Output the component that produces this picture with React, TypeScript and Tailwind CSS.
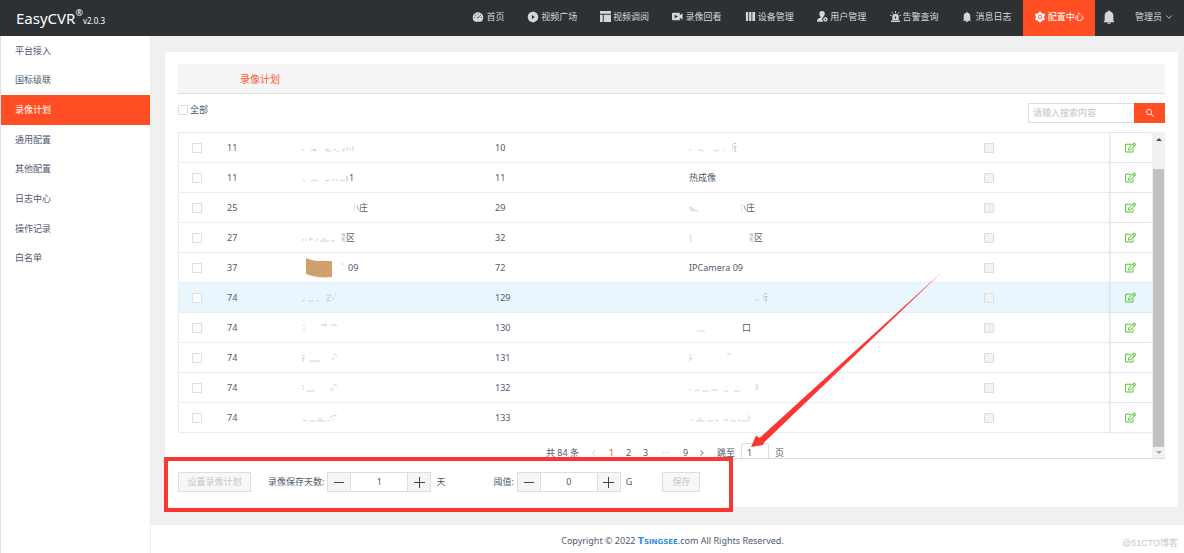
import { FC, ReactNode, useState } from 'react';
import { AiFillBell, AiFillDashboard, AiFillPlayCircle, AiFillSetting, AiOutlineSearch } from 'react-icons/ai';
import { FaRegEdit } from 'react-icons/fa';
import { ChevronDown, ChevronLeft, ChevronRight } from 'lucide-react';

const LayoutIcon = () => (
  <svg viewBox="0 0 12 12" className="size-[11px]" fill="currentColor">
    <path d="M0 0h12v3H0zM0 4h3v8H0zM4 4h8v8H4z" />
  </svg>
);

const RecordIcon = () => (
  <svg viewBox="0 0 12 12" className="size-[11px]" fill="currentColor">
    <path fillRule="evenodd" d="M1 2h7.500v2.600L11.500 2.500v7L8.500 7.400V10H1a1 1 0 0 1-1-1V3a1 1 0 0 1 1-1zm2 2v4l3.500-2z" />
  </svg>
);

const DeviceIcon = () => (
  <svg viewBox="0 0 12 12" className="size-[11px]" fill="currentColor">
    <path d="M1 1h2.500v10H1zM4.500 1H7v10H4.500zM8 1h3v10H8z" />
  </svg>
);

const UserIcon = () => (
  <svg viewBox="0 0 12 12" className="size-[11px]" fill="currentColor">
    <path d="M5.500 0a3 3 0 0 1 3 3c0 1.300-.6 2.300-1.300 3L7 6.500c-1.200.7-1.500 2-1.200 3.300.2.900.6 1.500 1.200 1.900H0C0 9 1 7.800 4 7L3.800 6C3 5.300 2.500 4.300 2.500 3a3 3 0 0 1 3-3z" />
    <path fillRule="evenodd" d="M9.200 6.500l.8.700 1 .1.200 1 .6.900-.6.900-.2 1-1 .1-.8.600-.8-.6-1-.1-.2-1-.6-.9.600-.9.200-1 1-.1zm0 1.900a.8.800 0 1 0 0 1.600.8.800 0 0 0 0-1.600z" />
  </svg>
);

const AlarmIcon = () => (
  <svg viewBox="0 0 12 12" className="size-[11px]" fill="currentColor">
    <path fillRule="evenodd" d="M2.500 10V6.500a3.500 3.500 0 0 1 7 0V10zM6.500 5L4.700 7.500h1L5.500 9.300l1.800-2.600h-1z" />
    <path d="M1 10.500h10V12H1z" />
    <path d="M6 0v2M2 1.200l1.200 1.500M10 1.200L8.800 2.700M0 4.500l1.700.6M12 4.500l-1.700.6" stroke="currentColor" />
  </svg>
);

const navItems: { label: string; icon: ReactNode }[] = [
  { label: '视频广场', icon: <AiFillPlayCircle size={12} /> },
  { label: '视频调阅', icon: <LayoutIcon /> },
  { label: '录像回看', icon: <RecordIcon /> },
  { label: '设备管理', icon: <DeviceIcon /> },
  { label: '用户管理', icon: <UserIcon /> },
  { label: '告警查询', icon: <AlarmIcon /> },
  { label: '消息日志', icon: <AiFillBell size={12} /> },
  { label: '配置中心', icon: <AiFillSetting size={12} /> },
];

const menuItems = ['平台接入', '国标级联', '录像计划', '通用配置', '其他配置', '日志中心', '操作记录', '白名单'];

// A name that has been rubbed out: leftover marks, then a half visible character, then the readable end
interface Masked {
  marks?: string;
  width?: number;
  faded?: string;
  text?: string;
  patch?: boolean;
}

interface Row {
  id: string;
  name: Masked;
  channel: string;
  device: Masked;
}

const rows: Row[] = [
  {
    id: '11',
    name: { marks: 'M0 9l2-2M9 9l2-1 4 1M11 7l3 1M23 8l4-1M24 9h5M31 9l3-2M36 8v2M40 8l2 1M42 6v3M45 9V5M48 9V6M51 9V4', width: 54 },
    channel: '10',
    device: { marks: 'M0 9l2-2M9 9l2-1 4 1M25 9l5-1M34 9l2-1', width: 39, faded: '析' },
  },
  {
    id: '11',
    name: { marks: 'M1 8l2 1M9 9l3-1 4 1M23 9l5-1M30 9l3-2M35 7v2M38 8l3 1M42 9V7M44 5l2-1M45 10V4M44 7h3', width: 47, text: '1' },
    channel: '11',
    device: { text: '热成像' },
  },
  { id: '25', name: { width: 48, faded: '小', text: '庄' }, channel: '29', device: { marks: 'M0 5l3 1-3 2M2 8l7 1M4 6v3', width: 48, faded: '小', text: '庄' } },
  {
    id: '27',
    name: { marks: 'M0 9l2-2M4 9V7M8 9V6l3 2M13 9l3-3M18 9h9M20 7h4M29 9h4', width: 35, faded: '景', text: '区' },
    channel: '32',
    device: { marks: 'M2 2L0 5M2 5v5', width: 56, faded: '景', text: '区' },
  },
  { id: '37', name: { patch: true, width: 46, text: '09' }, channel: '72', device: { text: 'IPCamera 09' } },
  {
    id: '74',
    name: { marks: 'M0 9l3-1M6 9h6M15 8l2 1M24 3h5l-2 3M24 8l5 1M32 3l2-1M26 5v4M31 5v3', width: 40 },
    channel: '129',
    device: { marks: 'M66 9l4-2', width: 70, faded: '析' },
  },
  {
    id: '74',
    name: { marks: 'M1 3l2 1M1 8l2-1M19 3h6M22 2l3 2M28 3h5M32 2l3 2', width: 40 },
    channel: '130',
    device: { marks: 'M8 9h8', width: 53, text: '口' },
  },
  {
    id: '74',
    name: { marks: 'M0 3l3 1M0 7l3-1M1 5v5M7 9h11M30 8l2-3M32 2l3 2', width: 40 },
    channel: '131',
    device: { marks: 'M0 3h3M0 6h3M0 9l3-3M38 2h4', width: 44 },
  },
  {
    id: '74',
    name: { marks: 'M0 3l2 2M1 8l1-2M5 9h8M28 8l3-3M30 9l2-2M31 2l4 2', width: 40 },
    channel: '132',
    device: { marks: 'M0 9l2-2M6 9l5-1M13 9h7M22 8h7M35 9h4M45 9h6M66 3h3l-1 5M66 6h3', width: 72 },
  },
  {
    id: '74',
    name: { marks: 'M1 8l4 1M7 9h6M14 9h9M16 7h4M25 9l3-1M28 6l3-2M31 7v2M31 3l4 1', width: 40 },
    channel: '133',
    device: { marks: 'M2 7l3 2M7 9h9M9 7h4M18 9h6M26 8l4 1M35 8h4M41 9h6M49 8l3 1M53 9h6M60 3v6', width: 64 },
  },
];

const MaskedText: FC<Masked> = ({ marks, width = 0, faded, text, patch }) => (
  <div className="flex items-center">
    {width > 0 && (
      <svg width={width} height={20} viewBox={`0 -4 ${width} 20`} className="shrink-0" fill="none">
        {patch && (
          <>
            <path d="M4-4C12 0 20-1 30-1V15C20 16 12 15 4 12z" fill="#d29f6e" />
            <path d="M39 2h3M42 7v1" stroke="#dcdee2" />
          </>
        )}
        {marks && <path d={marks} stroke="#c5c8ce" strokeWidth="0.8" />}
      </svg>
    )}
    {faded && (
      <span className="bg-linear-to-r from-transparent from-35% to-[#6b7385] to-90% bg-clip-text text-transparent">
        {faded}
      </span>
    )}
    {text && <span>{text}</span>}
  </div>
);

const checkboxClass =
  'block size-[10px] appearance-none rounded-[1px] border border-[#dcdee2] bg-white checked:bg-[#ff4e24] disabled:bg-[#f3f3f3]';

interface StepperProps {
  id: string;
  label: string;
  unit: string;
  initial: number;
}

const Stepper: FC<StepperProps> = ({ id, label, unit, initial }) => {
  const [value, setValue] = useState(initial);

  return (
    <div className="flex items-center">
      <label htmlFor={id}>{label}</label>
      <div className="mr-[5px] ml-[3px] flex h-5 border border-[#dcdee2]">
        <button
          type="button"
          aria-label="减少"
          onClick={() => setValue(Math.max(0, value - 1))}
          className="flex w-[23px] items-center justify-center border-r border-[#dcdee2] bg-[#f5f5f5]"
        >
          <span className="h-px w-[10px] bg-[#3c4353]" />
        </button>
        <input
          id={id}
          value={value}
          onChange={(e) => setValue(Number(e.target.value) || 0)}
          className="w-14 bg-white text-center outline-none"
        />
        <button
          type="button"
          aria-label="增加"
          onClick={() => setValue(value + 1)}
          className="flex w-[23px] items-center justify-center border-l border-[#dcdee2] bg-[#f5f5f5]"
        >
          <svg viewBox="0 0 11 11" className="size-[11px]" stroke="#3c4353">
            <path d="M5.500 0v11M0 5.500h11" />
          </svg>
        </button>
      </div>
      <span>{unit}</span>
    </div>
  );
};

const Header: FC = () => (
  <header className="flex h-9 shrink-0 items-stretch bg-[#2d3134] text-[#d5d6d7]">
    <h1 className="flex items-center pl-4 text-[15px] text-white">
      EasyCVR
      <sup className="top-[-5px] text-[9px]">®</sup>
      <span className="mt-[6px] text-[8px]">v2.0.3</span>
    </h1>
    <nav className="ml-auto flex w-[634px] pb-[3px]">
      <a href="#home" className="flex w-[55px] items-center justify-center gap-[2px]">
        <AiFillDashboard size={12} />
        首页
      </a>
      {navItems.map(({ label, icon }) => (
        <a
          key={label}
          href={`#${label}`}
          className={
            label === '配置中心'
              ? '-mb-[3px] flex flex-1 items-center justify-center gap-[2px] bg-[#ff4e24] pb-[3px] whitespace-nowrap text-white'
              : 'flex flex-1 items-center justify-center gap-[2px] whitespace-nowrap'
          }
        >
          {icon}
          {label}
        </a>
      ))}
    </nav>
    <button type="button" aria-label="消息" className="flex w-7 items-center justify-center pb-[3px]">
      <AiFillBell size={16} />
    </button>
    <button type="button" className="flex w-[61px] items-center gap-[2px] pb-[3px] pl-3 whitespace-nowrap">
      管理员
      <ChevronDown size={10} />
    </button>
  </header>
);

const RecordTable: FC = () => {
  const [selected, setSelected] = useState<number[]>([]);

  const toggle = (index: number) => {
    setSelected(selected.includes(index) ? selected.filter((i) => i !== index) : [...selected, index]);
  };

  return (
    <table className="w-full table-fixed border-separate border-spacing-0 border-t border-l border-[#e8eaec] text-left">
      <colgroup>
        <col className="w-[39px]" />
        <col className="w-[74px]" />
        <col className="w-[194px]" />
        <col className="w-[194px]" />
        <col className="w-[188px]" />
        <col />
        <col className="w-[42px]" />
      </colgroup>
      <tbody>
        {rows.map((row, index) => (
          <tr key={index} className={index === 5 ? 'h-[30px] bg-[#e9f6fe]' : 'h-[30px] bg-white'}>
            <td className="border-b border-[#ebecee] pl-[13px]">
              <input
                type="checkbox"
                aria-label={`选择 ${row.channel}`}
                checked={selected.includes(index)}
                onChange={() => toggle(index)}
                className={checkboxClass}
              />
            </td>
            <td className="border-b border-[#ebecee] pl-[9px]">{row.id}</td>
            <td className="border-b border-[#ebecee] pl-[10px]">
              <MaskedText {...row.name} />
            </td>
            <td className="border-b border-[#ebecee] pl-[9px]">{row.channel}</td>
            <td className="border-b border-[#ebecee] pl-[9px]">
              <MaskedText {...row.device} />
            </td>
            <td className="border-b border-[#ebecee]">
              <input type="checkbox" aria-label={`录像 ${row.channel}`} disabled className={`${checkboxClass} mx-auto`} />
            </td>
            <td className="border-b border-l border-b-[#ebecee] border-l-[#e8e9eb] pr-[2px] shadow-[-1px_0_2px_rgba(0,0,0,0.08)]">
              <button type="button" aria-label="编辑" className="mx-auto block text-[#55c431]">
                <FaRegEdit size={11} />
              </button>
            </td>
          </tr>
        ))}
      </tbody>
    </table>
  );
};

const Pagination: FC = () => (
  <div className="mt-[10px] flex h-5 items-center justify-center text-[#515a6e]">
    <span className="mr-[7px]">共 84 条</span>
    <button type="button" aria-label="上一页" className="flex w-[17px] justify-center text-[#c5c8ce]">
      <ChevronLeft size={10} />
    </button>
    <button type="button" className="w-[17px] text-[#ff4e24]">1</button>
    <button type="button" className="w-[17px]">2</button>
    <button type="button" className="w-[17px]">3</button>
    <span className="w-[23px] text-center text-[#c5c8ce]">···</span>
    <button type="button" className="w-[17px]">9</button>
    <button type="button" aria-label="下一页" className="flex w-[17px] justify-center">
      <ChevronRight size={10} />
    </button>
    <label htmlFor="jump" className="ml-[6px]">跳至</label>
    <input
      id="jump"
      defaultValue="1"
      className="mx-[6px] h-5 w-7 rounded-[2px] border border-[#dcdee2] bg-white px-[5px] pb-[2px] outline-none"
    />
    <span>页</span>
  </div>
);

const App: FC = () => (
  <div className="relative flex min-h-screen flex-col overflow-hidden bg-white font-['Noto_Sans','Noto_Sans_CJK_SC',sans-serif] text-[9px] leading-3 text-[#515a6e]">
    <Header />
    <div className="flex flex-1">
      <aside className="w-[151px] shrink-0 border-x border-l-[#dfe3e8] border-r-[#eeeeee]">
        <ul className="flex h-[237px] flex-col">
          {menuItems.map((item) => (
            <li key={item} className="flex flex-1">
              <a
                href={`#${item}`}
                className={
                  item === '录像计划'
                    ? 'flex flex-1 items-center bg-[#ff4e24] pl-[14px] text-white'
                    : 'flex flex-1 items-center pl-[14px]'
                }
              >
                {item}
              </a>
            </li>
          ))}
        </ul>
      </aside>
      <div className="flex min-w-0 flex-1 flex-col">
        <main className="bg-[#f0f0f0] pt-4 pr-[6px] pb-[18px] pl-[14px]">
          <section className="bg-white px-[13px] pt-3 pb-[15px]">
            <div className="flex h-[30px] items-center border-b border-[#dcdee2] bg-[#f5f5f5] pl-[62px]">
              <h2 className="text-[10px] text-[#ff5a33]">录像计划</h2>
            </div>
            <div className="flex h-[38px] items-center justify-between">
              <label className="flex items-center gap-[2px] pb-[6px]">
                <input type="checkbox" className={checkboxClass} />
                全部
              </label>
              <form className="flex h-5" onSubmit={(e) => e.preventDefault()}>
                <input
                  type="search"
                  aria-label="搜索"
                  placeholder="请输入搜索内容"
                  className="w-[106px] border border-r-0 border-[#dcdee2] px-1 outline-none placeholder:text-[#c0c4cc]"
                />
                <button type="submit" aria-label="搜索" className="flex w-[31px] items-center justify-center bg-[#ff4e24] text-white">
                  <AiOutlineSearch size={10} />
                </button>
              </form>
            </div>
            <div className="flex h-[327px] overflow-hidden border-b border-[#dcdcdc]">
              <div className="min-w-0 flex-1">
                <RecordTable />
                <Pagination />
              </div>
              <div className="flex w-[13px] shrink-0 flex-col items-center bg-[#f1f1f1]">
                <span className="mt-[6px] border-x-[3px] border-b-[3px] border-x-transparent border-b-[#505050]" />
                <span className="mt-7 w-[11px] flex-1 bg-[#c1c1c1]" />
                <span className="my-1 border-x-[3px] border-t-[3px] border-x-transparent border-t-[#a3a3a3]" />
              </div>
            </div>
            <div className="mt-[13px] flex items-center">
              <button type="button" disabled className="h-5 w-[73px] border border-[#dcdee2] bg-[#f7f7f7] text-[#c5c8ce]">
                设置录像计划
              </button>
              <div className="ml-[17px]">
                <Stepper id="days" label="录像保存天数:" unit="天" initial={1} />
              </div>
              <div className="ml-12">
                <Stepper id="threshold" label="阈值:" unit="G" initial={0} />
              </div>
              <button type="button" disabled className="ml-[30px] h-5 w-[38px] border border-[#dcdee2] bg-[#f7f7f7] text-[#c5c8ce]">
                保存
              </button>
            </div>
          </section>
        </main>
        <footer className="relative flex flex-1 items-center justify-center pt-1 pl-[10px]">
          <p>
            Copyright © 2022{' '}
            <a href="#tsingsee" className="font-['DejaVu_Sans',sans-serif] text-[9px] font-bold text-[#2f8fdd]">
              T<span className="text-[7px]">SINGSEE</span>
            </a>
            .com All Rights Reserved.
          </p>
          <span className="absolute right-[6px] bottom-1 font-['Liberation_Sans','Noto_Sans_CJK_SC',sans-serif] text-[#c8c8c8]">
            @51CTO博客
          </span>
        </footer>
      </div>
    </div>

    {/* Annotations drawn over the page */}
    <div className="pointer-events-none absolute top-[457px] left-[164px] h-[55px] w-[569px] border-4 border-[#fb3634]" />
    <svg className="pointer-events-none absolute top-[271px] left-[751px]" width="193" height="177" viewBox="0 0 193 177" fill="#fb3634">
      <path d="M192 0L13 171.500L12 174L0 176L5 164.500L8.500 167z" />
    </svg>
  </div>
);

export default App;
